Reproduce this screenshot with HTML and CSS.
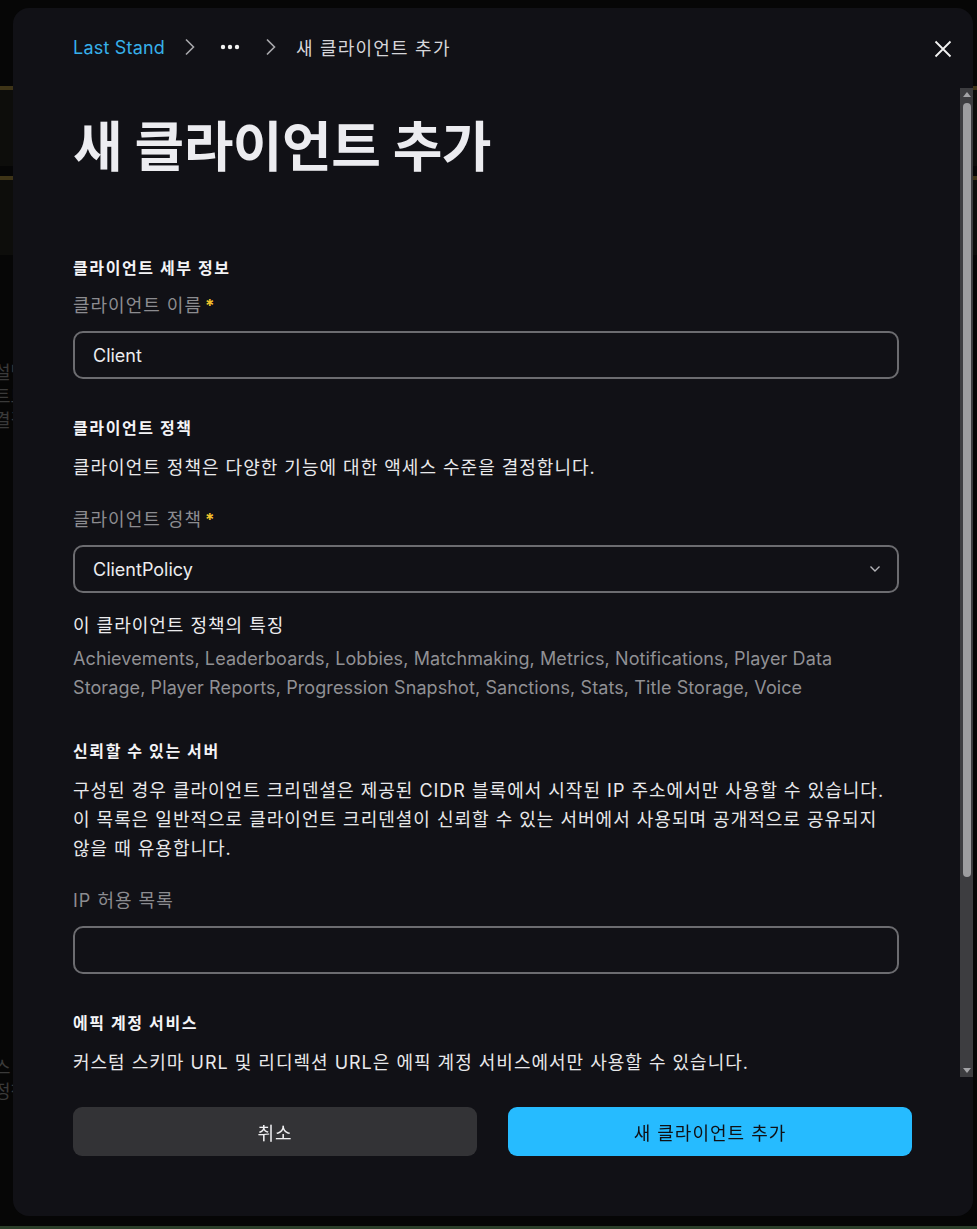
FILE: index.html
```html
<!DOCTYPE html>
<html lang="ko">

<head>
    <meta charset="UTF-8">
    <meta name="viewport" content="width=device-width, initial-scale=1.0">
    <title>새 클라이언트 추가</title>
    <link rel="stylesheet" href="styles.css">
</head>

<body>

    <!-- 뒤쪽 페이지 (모달에 가려짐) -->
    <div class="page">
        <div class="page-band"></div>
        <div class="page-band"></div>
        <div class="page-text">
            <p>설명어가</p>
            <p>트트트</p>
            <p>결결결</p>
        </div>
        <div class="page-text page-text-low">
            <p>스 지</p>
            <p>정책</p>
        </div>
        <div class="page-foot"></div>
    </div>

    <!-- 새 클라이언트 추가 모달 -->
    <div class="modal">
        <div class="modal-header">
            <nav class="crumbs">
                <a class="crumb-link" href="#">Last Stand</a>
                <svg class="crumb-sep" width="12" height="18" viewBox="0 0 12 18"><path d="M2 1.5 L9.5 9 L2 16.5" fill="none" stroke="#a8a8ac" stroke-width="1.6"/></svg>
                <span class="crumb-more">
                    <svg width="20" height="6" viewBox="0 0 20 6"><circle cx="3" cy="3" r="2.2" fill="#f2f2f2"/><circle cx="10" cy="3" r="2.2" fill="#f2f2f2"/><circle cx="17" cy="3" r="2.2" fill="#f2f2f2"/></svg>
                </span>
                <svg class="crumb-sep crumb-sep-last" width="12" height="18" viewBox="0 0 12 18"><path d="M2 1.5 L9.5 9 L2 16.5" fill="none" stroke="#a8a8ac" stroke-width="1.6"/></svg>
                <span class="crumb-current">새 클라이언트 추가</span>
            </nav>
            <button class="close-btn" aria-label="닫기">
                <svg width="18" height="18" viewBox="0 0 18 18"><path d="M1.5 1.5 L16.5 16.5 M16.5 1.5 L1.5 16.5" stroke="#f2f2f2" stroke-width="1.8"/></svg>
            </button>
        </div>

        <div class="modal-main">
            <div class="modal-body">
                <h1 class="title">새 클라이언트 추가</h1>

                <section class="section first">
                    <h3 class="section-title">클라이언트 세부 정보</h3>
                    <div class="field">
                        <label class="label" for="clientName">클라이언트 이름<span class="req">*</span></label>
                        <input class="input" id="clientName" type="text" value="Client">
                    </div>
                </section>

                <section class="section">
                    <h3 class="section-title">클라이언트 정책</h3>
                    <p class="desc">클라이언트 정책은 다양한 기능에 대한 액세스 수준을 결정합니다.</p>
                    <div class="field spaced">
                        <label class="label" for="clientPolicy">클라이언트 정책<span class="req">*</span></label>
                        <div class="select">
                            <span id="clientPolicy">ClientPolicy</span>
                            <svg width="12" height="8" viewBox="0 0 12 8"><path d="M1.5 1.5 L6 6 L10.5 1.5" fill="none" stroke="#b4b4b8" stroke-width="1.4"/></svg>
                        </div>
                    </div>
                    <div class="features">
                        <div class="features-title">이 클라이언트 정책의 특징</div>
                        <p class="features-list">Achievements, Leaderboards, Lobbies, Matchmaking, Metrics, Notifications, Player Data Storage, Player Reports, Progression Snapshot, Sanctions, Stats, Title Storage, Voice</p>
                    </div>
                </section>

                <section class="section">
                    <h3 class="section-title">신뢰할 수 있는 서버</h3>
                    <p class="desc">구성된 경우 클라이언트 크리덴셜은 제공된 CIDR 블록에서 시작된 IP 주소에서만 사용할 수 있습니다. 이 목록은 일반적으로 클라이언트 크리덴셜이 신뢰할 수 있는 서버에서 사용되며 공개적으로 공유되지 않을 때 유용합니다.</p>
                    <div class="field spaced">
                        <label class="label" for="ipList">IP 허용 목록</label>
                        <input class="input" id="ipList" type="text">
                    </div>
                </section>

                <section class="section">
                    <h3 class="section-title">에픽 계정 서비스</h3>
                    <p class="desc">커스텀 스키마 URL 및 리디렉션 URL은 에픽 계정 서비스에서만 사용할 수 있습니다.</p>
                    <div class="field spaced">
                        <label class="label" for="redirectUrl">리디렉션 URL</label>
                        <input class="input" id="redirectUrl" type="text">
                    </div>
                </section>
            </div>

            <!-- 스크롤바 -->
            <div class="scrollbar">
                <span class="scroll-arrow up"></span>
                <span class="scroll-thumb"></span>
                <span class="scroll-arrow down"></span>
            </div>
        </div>

        <div class="modal-footer">
            <button class="btn btn-cancel">취소</button>
            <button class="btn btn-primary">새 클라이언트 추가</button>
        </div>
    </div>

</body>

</html>
```

FILE: styles.css
```css
/* 기본 */
* {
    box-sizing: border-box;
}

html,
body {
    margin: 0;
    height: 100%;
}

body {
    background-color: #060606;
    font-family: Inter, "Noto Sans CJK KR", sans-serif;
    color: #ececee;
    overflow: hidden;
}

/* 뒤쪽 페이지 */
.page {
    height: 100%;
    display: flex;
    flex-direction: column;
}

.page-band {
    margin-top: 86px;
    height: 80px;
    border-top: 4px solid #3e3417;
    background-color: #0d0d0b;
}

.page-band + .page-band {
    margin-top: 10px;
    height: 79px;
}

.page-text {
    margin-top: 106px;
    margin-left: -6px;
    color: #3a3a3a;
    font-size: 18px;
    line-height: 24px;
}

.page-text p {
    margin: 0;
}

.page-text-low {
    margin-top: auto;
    margin-bottom: 122px;
}

.page-foot {
    height: 3px;
    background-color: #2c3f2a;
}

/* 모달 */
.modal {
    position: fixed;
    left: 13px;
    top: 8px;
    width: 960px;
    height: 1208px;
    background-color: #111116;
    border-radius: 16px;
    display: flex;
    flex-direction: column;
}

.modal-header {
    height: 80px;
    flex: none;
    display: flex;
    align-items: flex-start;
    justify-content: space-between;
    padding: 27px 17px 0 60px;
}

.crumbs {
    display: flex;
    align-items: center;
    height: 24px;
    font-size: 18px;
}

.crumb-link {
    color: #37b0ea;
    text-decoration: none;
    letter-spacing: 0.2px;
}

.crumb-sep {
    margin-left: 19px;
}

.crumb-sep-last {
    margin-left: 25px;
}

.crumb-more {
    display: flex;
    align-items: center;
    margin-left: 24px;
}

.crumb-current {
    margin-left: 19px;
    color: #d6d6da;
    letter-spacing: 1.2px;
}

.close-btn {
    background: none;
    border: none;
    padding: 4px;
    margin-top: 1px;
    cursor: pointer;
    display: flex;
}

.modal-main {
    flex: 1;
    min-height: 0;
    display: flex;
}

.modal-body {
    flex: 1;
    overflow: hidden;
    padding: 26px 61px 40px 60px;
}

/* 스크롤바 */
.scrollbar {
    width: 13px;
    flex: none;
    background-color: #3d3d40;
    display: flex;
    flex-direction: column;
    align-items: center;
}

.scroll-arrow {
    width: 0;
    height: 0;
    border-left: 4px solid transparent;
    border-right: 4px solid transparent;
}

.scroll-arrow.up {
    margin-top: 4px;
    border-bottom: 5px solid #a3a3a6;
}

.scroll-arrow.down {
    margin-top: auto;
    margin-bottom: 4px;
    border-top: 5px solid #a3a3a6;
}

.scroll-thumb {
    margin-top: 6px;
    width: 8px;
    height: 774px;
    border-radius: 4px;
    background-color: #9d9d9f;
}

.title {
    margin: 0;
    font-size: 54px;
    line-height: 68px;
    font-weight: 700;
    letter-spacing: -0.5px;
    color: #ececf0;
}

.section {
    margin-top: 37px;
}

.section.first {
    margin-top: 74px;
}

.section-title {
    margin: 0;
    font-size: 16px;
    line-height: 24px;
    font-weight: 700;
    letter-spacing: 1.6px;
    color: #f4f4f6;
}

.desc {
    margin: 13px 0 0;
    font-size: 18px;
    line-height: 29px;
    letter-spacing: 1px;
    color: #e8e8ea;
}

.field {
    margin-top: 13px;
}

.field.spaced {
    margin-top: 25px;
}

.label {
    display: block;
    font-size: 18px;
    line-height: 26px;
    letter-spacing: 1px;
    color: #8c8c90;
    margin-bottom: 12px;
}

.req {
    color: #f0c12c;
    margin-left: 3px;
    font-weight: 700;
    font-size: 17px;
}

.input,
.select {
    display: flex;
    align-items: center;
    width: 100%;
    height: 48px;
    padding: 0 18px;
    border: 2px solid #6c6c70;
    border-radius: 10px;
    background-color: #111116;
    color: #ececee;
    font-family: inherit;
    font-size: 18px;
    outline: none;
}

.select {
    justify-content: space-between;
    padding-right: 16px;
}

.features {
    margin-top: 20px;
}

.features-title {
    font-size: 18px;
    line-height: 26px;
    letter-spacing: 1px;
    color: #ececee;
}

.features-list {
    margin: 5px 0 0;
    font-size: 18px;
    line-height: 29px;
    letter-spacing: 0.1px;
    color: #909094;
}

/* 하단 버튼 */
.modal-footer {
    flex: none;
    display: flex;
    gap: 31px;
    padding: 30px 61px 60px 60px;
}

.btn {
    flex: 1;
    height: 49px;
    border: none;
    border-radius: 9px;
    font-family: inherit;
    font-size: 18px;
    letter-spacing: 1px;
    cursor: pointer;
}

.btn-cancel {
    background-color: #333336;
    color: #f0f0f2;
}

.btn-primary {
    background-color: #26bbff;
    color: #101014;
}
```
